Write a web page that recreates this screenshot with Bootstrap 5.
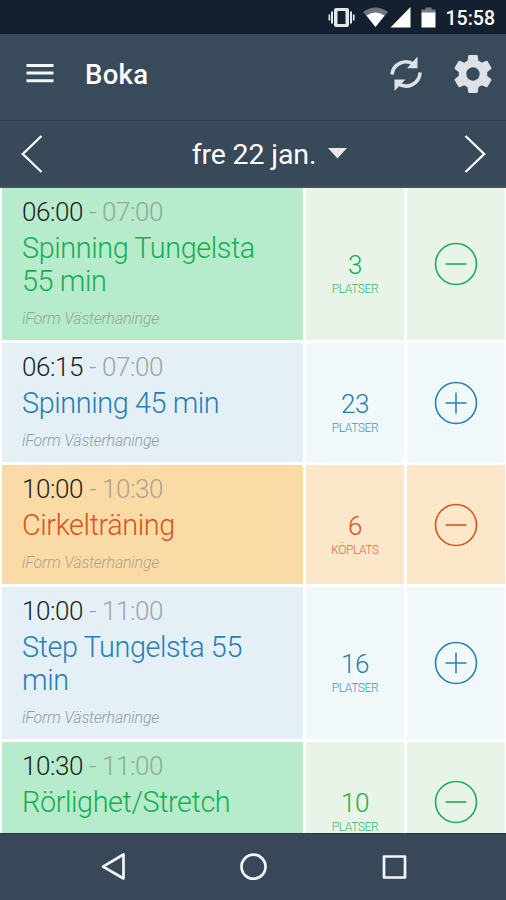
<!DOCTYPE html>
<html lang="sv">
<head>
<meta charset="utf-8">
<meta name="viewport" content="width=device-width, initial-scale=1">
<title>Boka</title>
<link href="https://cdn.jsdelivr.net/npm/bootstrap@5.3.0/dist/css/bootstrap.min.css" rel="stylesheet">
<style>
body{font-family:Roboto,"Noto Sans",sans-serif;background:#fff}
.app{height:900px}
.status{height:34px;background:#141f30;padding-right:11px}
.clock{font-size:19.500px;font-weight:500;line-height:34px;margin-left:9px;padding-top:3px}
.topbar{height:87px;background:#394a5b;padding-bottom:6px;border-bottom:1px solid #304050}
.brand{font-size:27.500px;font-weight:500;letter-spacing:.3px;padding-top:2px}
.datebar{height:67px;background:#384959;border-bottom:2px solid #44525e;padding:0 20px 0 21px}
.date{font-size:28.500px;line-height:34px;letter-spacing:-.15px;padding:3px 0 0 37px}
.date-pick svg{margin-left:8px}
.sched{background:#fff;padding-left:2px;min-height:0}
.slot{display:grid;grid-template-columns:301px 98px 98px;column-gap:3px;margin-bottom:3px;flex:none;height:119px}
.slot.tall{height:152px}
.info{padding:6px 30px 0 20px}
.time{font-size:26px;line-height:36px;font-weight:300;color:#222;white-space:nowrap;letter-spacing:-.42px}
.time span{color:#9aa7a8}
.name{font-size:28.800px;line-height:33px;font-weight:300;color:var(--ink);margin:2px 0 11px;letter-spacing:-.4px}
.venue{font-size:16px;line-height:20px;font-weight:300;font-style:italic;color:#93a09f;letter-spacing:-.22px}
.count{font-size:26px;line-height:28px;font-weight:300;letter-spacing:-.5px}
.unit{font-size:12px;line-height:20px;font-weight:300;letter-spacing:-.4px;opacity:.85}
.places{padding-top:22px;color:var(--ink)}
.act{color:var(--ink)}
.info{background:var(--deep)}
.places,.act{background:var(--pale)}
.green{--ink:#17ae52;--deep:#b6ebcb;--pale:#e9f4e9}
.blue{--ink:#2580b6;--deep:#e5eff6;--pale:#f1f8fa}
.orange{--ink:#d9531c;--deep:#fbdba5;--pale:#fce7cb}
.orange .time span,.orange .venue{color:#b3a08f}
.green .time span,.green .venue{color:#90a99b}
.sysnav{height:67px;background:#384859;border-top:1px solid #263748}
</style>
</head>
<body>
<svg class="d-none">
  <symbol id="minus" viewBox="0 0 44 44"><circle cx="22" cy="22" r="20.500" fill="none" stroke="currentColor" stroke-width="1.600"/><path d="M11.500 22h21" stroke="currentColor" stroke-width="1.600"/></symbol>
  <symbol id="plus" viewBox="0 0 44 44"><circle cx="22" cy="22" r="20.500" fill="none" stroke="currentColor" stroke-width="1.600"/><path d="M11.500 22h21M22 11.500v21" stroke="currentColor" stroke-width="1.500"/></symbol>
</svg>
<div class="app d-flex flex-column overflow-hidden">
  <div class="status d-flex align-items-center justify-content-end text-white flex-shrink-0">
    <svg width="110" height="34" viewBox="327 0 110 34">
      <g fill="#e4e7ea"><path fill-rule="evenodd" d="M336 8h11q2 0 2 2v15q0 2-2 2h-11q-2 0-2-2V10q0-2 2-2zm1.500 3v13h8V11z"/><path d="M331 11.500h2v12h-2zM328.500 14.500h1.700v6h-1.700zM350 11.500h2v12h-2zM352.900 14.500h1.700v6h-1.700z"/></g>
      <path d="M363 12q12.500-9 25 0L375.500 27z" fill="#6c7580"/><path d="M366.500 15.500q9-6 18 0L375.500 27z" fill="#fff"/>
      <path d="M410.500 7v20.500H390.500z" fill="#fff"/>
      <path d="M421.500 9.500h4V7.500h6v2h4V13h-14z" fill="#737b85"/><path d="M421.500 12.500h14v15h-14z" fill="#fff"/>
    </svg>
    <span class="clock">15:58</span>
  </div>
  <div class="topbar d-flex align-items-center flex-shrink-0 text-white">
    <svg width="85" height="40" viewBox="0 0 85 40"><path d="M26.500 11.500h27M26.500 19h27M26.500 26.700h27" stroke="#f4f7f9" stroke-width="3"/></svg>
    <span class="brand">Boka</span>
    <svg class="ms-auto" width="126" height="44" viewBox="380 52 126 44">
      <g fill="none" stroke="#dce2e8" stroke-width="3.600"><path d="M392 74.500A14 14 0 0 1 414 64.500"/><path d="M420 72.500A14 14 0 0 1 398 83.500"/></g>
      <path d="M417.500 56.500v11.800H407zM394.500 91V79.500H405.500z" fill="#dce2e8"/>
      <g transform="translate(450.200 51.200) scale(1.900)"><path fill="#dce2e8" d="M19.430 12.980c.04-.32.070-.640.070-.980s-.03-.66-.07-.98l2.110-1.650c.19-.15.24-.42.12-.64l-2-3.460c-.12-.22-.39-.3-.61-.22l-2.490 1c-.52-.4-1.080-.73-1.690-.98l-.38-2.650C14.460 2.180 14.250 2 14 2h-4c-.25 0-.46.18-.49.42l-.38 2.650c-.61.25-1.170.59-1.690.98l-2.490-1c-.23-.09-.49 0-.61.22l-2 3.460c-.13.22-.07.49.12.64l2.110 1.650c-.04.32-.07.65-.07.98s.03.66.07.98l-2.110 1.650c-.19.15-.24.42-.12.64l2 3.460c.12.22.39.3.61.22l2.490-1c.52.4 1.080.73 1.690.98l.38 2.650c.03.24.24.42.49.42h4c.25 0 .46-.18.49-.42l.38-2.650c.61-.25 1.170-.59 1.690-.98l2.490 1c.23.09.49 0 .61-.22l2-3.460c.12-.22.07-.49-.12-.64l-2.110-1.650zM12 15.500c-1.930 0-3.500-1.570-3.500-3.500s1.570-3.500 3.500-3.500 3.500 1.570 3.500 3.500-1.570 3.500-3.500 3.500z"/></g>
    </svg>
  </div>
  <div class="datebar d-flex align-items-center justify-content-between flex-shrink-0 text-white">
    <svg width="22" height="40" viewBox="0 0 22 40"><path d="M20.500 2L1.800 20l18.700 18" fill="none" stroke="#fff" stroke-width="2.300"/></svg>
    <div class="date-pick d-flex align-items-center"><span class="date">fre 22 jan.</span><svg width="28" height="14" viewBox="0 0 28 14"><path d="M4 1h19l-9.500 10.500z" fill="#e9e8e6"/></svg></div>
    <svg width="22" height="40" viewBox="0 0 22 40"><path d="M1.500 2l18.700 18L1.500 38" fill="none" stroke="#fff" stroke-width="2.300"/></svg>
  </div>
  <main class="sched d-flex flex-column flex-fill overflow-hidden">
    <div class="slot tall green">
      <div class="info"><div class="time">06:00 <span>- 07:00</span></div><div class="name">Spinning Tungelsta 55 min</div><div class="venue">iForm Västerhaninge</div></div>
      <div class="places d-flex flex-column align-items-center justify-content-center"><div class="count">3</div><div class="unit">PLATSER</div></div>
      <div class="act d-flex align-items-center justify-content-center"><svg width="44" height="44"><use href="#minus"/></svg></div>
    </div>
    <div class="slot blue">
      <div class="info"><div class="time">06:15 <span>- 07:00</span></div><div class="name">Spinning 45 min</div><div class="venue">iForm Västerhaninge</div></div>
      <div class="places d-flex flex-column align-items-center justify-content-center"><div class="count">23</div><div class="unit">PLATSER</div></div>
      <div class="act d-flex align-items-center justify-content-center"><svg width="44" height="44"><use href="#plus"/></svg></div>
    </div>
    <div class="slot orange">
      <div class="info"><div class="time">10:00 <span>- 10:30</span></div><div class="name">Cirkelträning</div><div class="venue">iForm Västerhaninge</div></div>
      <div class="places d-flex flex-column align-items-center justify-content-center"><div class="count">6</div><div class="unit">KÖPLATS</div></div>
      <div class="act d-flex align-items-center justify-content-center"><svg width="44" height="44"><use href="#minus"/></svg></div>
    </div>
    <div class="slot tall blue">
      <div class="info"><div class="time">10:00 <span>- 11:00</span></div><div class="name">Step Tungelsta 55 min</div><div class="venue">iForm Västerhaninge</div></div>
      <div class="places d-flex flex-column align-items-center justify-content-center"><div class="count">16</div><div class="unit">PLATSER</div></div>
      <div class="act d-flex align-items-center justify-content-center"><svg width="44" height="44"><use href="#plus"/></svg></div>
    </div>
    <div class="slot green">
      <div class="info"><div class="time">10:30 <span>- 11:00</span></div><div class="name">Rörlighet/Stretch</div></div>
      <div class="places d-flex flex-column align-items-center justify-content-center"><div class="count">10</div><div class="unit">PLATSER</div></div>
      <div class="act d-flex align-items-center justify-content-center"><svg width="44" height="44"><use href="#minus"/></svg></div>
    </div>
  </main>
  <nav class="sysnav flex-shrink-0">
    <svg class="d-block" width="506" height="66" viewBox="0 834 506 66" fill="none" stroke="#f2f5f8" stroke-width="2.700" stroke-linejoin="round"><path d="M123.500 854.500v24L103 866.700z"/><circle cx="253.500" cy="866.700" r="12"/><path d="M384 856.500h21v21h-21z"/></svg>
  </nav>
</div>
<script src="https://cdn.jsdelivr.net/npm/bootstrap@5.3.0/dist/js/bootstrap.bundle.min.js"></script>
</body>
</html>
